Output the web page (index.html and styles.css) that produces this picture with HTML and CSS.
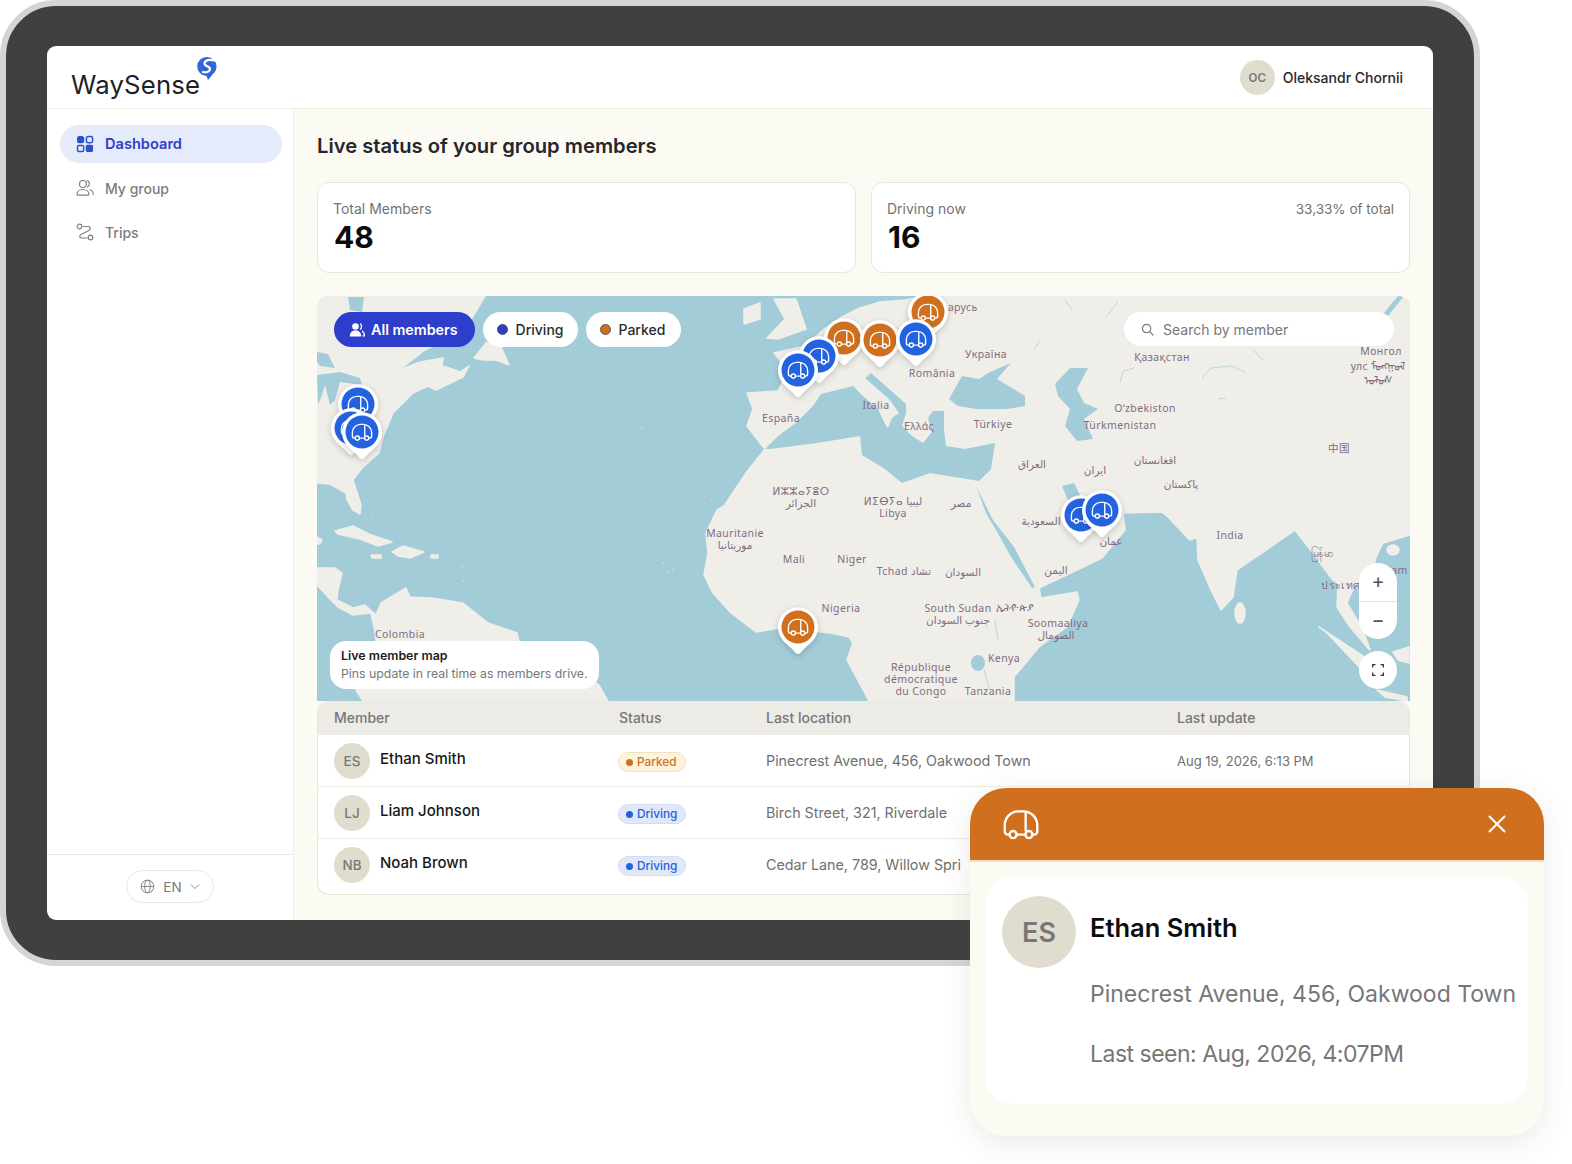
FILE: index.html
```html
<!DOCTYPE html>
<html lang="en">
<head>
    <meta charset="UTF-8">
    <meta name="viewport" content="width=device-width, initial-scale=1.0">
    <title>WaySense</title>
    <link rel="stylesheet" href="styles.css">
</head>
<body>
    <svg class="defs" width="0" height="0">
        <symbol id="car" viewBox="0 0 24 20">
            <path d="M4.5 16.5H3.5a2 2 0 0 1-2-2v-4a9 9 0 0 1 9-9h3a9 9 0 0 1 9 9v4a2 2 0 0 1-2 2h-1M9.2 16.5h5.6M15 1.800V14" fill="none" stroke="currentColor" stroke-width="1.5" stroke-linecap="round" stroke-linejoin="round"/>
            <circle cx="6.900" cy="16.5" r="2.300" fill="none" stroke="currentColor" stroke-width="1.5"/>
            <circle cx="17.100" cy="16.5" r="2.300" fill="none" stroke="currentColor" stroke-width="1.5"/>
        </symbol>
        <symbol id="pin" viewBox="0 0 40 47" overflow="visible">
            <path d="M20 47c-2 0-3-2-5-4C10 38 3 33 1.200 27A20 20 0 1 1 38.800 27C37 33 30 38 25 43c-2 2-3 4-5 4z" fill="#fff"/>
            <circle cx="20" cy="20" r="16.500" fill="currentColor"/>
            <use href="#car" x="9" y="11" width="22" height="18.300" color="#fff"/>
        </symbol>
    </svg>

    <div class="device">
        <div class="screen">
            <header class="top-bar">
                <div class="logo">
                    <span>WaySense</span>
                    <svg class="logo-mark" viewBox="0 0 20 23" width="20" height="23">
                        <path d="M10 0a9.500 9.500 0 0 1 9.500 9.500c0 3.500-1.500 5.500-4 8L11 23 9.500 19A9.500 9.500 0 0 1 10 0z" fill="#2f66d8"/>
                        <path d="M17 3.500C13 2 7.500 3 7.500 6.500c0 3 5.500 2.500 5.500 5.500 0 2.500-3.500 4-7 3" fill="none" stroke="#fff" stroke-width="2.300" stroke-linecap="round"/>
                    </svg>
                </div>
                <div class="user">
                    <span class="avatar avatar-sm">OC</span>
                    <span class="user-name">Oleksandr Chornii</span>
                </div>
            </header>

            <div class="body-row">
                <aside class="sidebar">
                    <nav class="nav">
                        <a class="nav-item active">
                            <svg viewBox="0 0 18 18" width="18" height="18">
                                <rect x="1" y="1" width="7.200" height="7.200" rx="2.500" fill="#2d4fd0"/>
                                <rect x="10.400" y="1.500" width="6.200" height="6.200" rx="2" fill="none" stroke="#2d4fd0" stroke-width="1.500"/>
                                <rect x="1.500" y="10.400" width="6.200" height="6.200" rx="1.500" fill="none" stroke="#2d4fd0" stroke-width="1.500"/>
                                <rect x="9.800" y="9.800" width="7.200" height="7.200" rx="1.500" fill="#2d4fd0"/>
                            </svg>
                            Dashboard
                        </a>
                        <a class="nav-item">
                            <svg viewBox="0 0 18 18" width="18" height="18" fill="none" stroke="#808080" stroke-width="1.200" stroke-linecap="round">
                                <circle cx="7" cy="5" r="3.500"/>
                                <path d="M1 15.500c0-3 2.500-5 6-5s6 2 6 5c0 .5-.3.700-1 .700H2c-.7 0-1-.2-1-.7zM11.500 1.800c2.500.5 2.500 5.500 0 6.300M14 10.800c2 .7 3.200 2.300 3.200 4.500"/>
                            </svg>
                            My group
                        </a>
                        <a class="nav-item">
                            <svg viewBox="0 0 18 18" width="18" height="18" fill="none" stroke="#808080" stroke-width="1.200">
                                <circle cx="3.500" cy="3.500" r="2.300"/>
                                <circle cx="14.500" cy="14.500" r="2.300"/>
                                <path d="M7.500 3.500h5c2 0 2.500 3 .5 4L5 11.500c-2 1-1.500 3.500.5 3.500h5.500" stroke-linecap="round"/>
                            </svg>
                            Trips
                        </a>
                    </nav>
                    <div class="side-foot">
                        <div class="lang">
                            <svg viewBox="0 0 16 16" width="15" height="15" fill="none" stroke="#808080" stroke-width="1">
                                <circle cx="8" cy="8" r="6.800"/>
                                <ellipse cx="8" cy="8" rx="3" ry="6.800"/>
                                <path d="M1.200 8h13.600"/>
                            </svg>
                            <span>EN</span>
                            <svg viewBox="0 0 12 8" width="10" height="7" fill="none" stroke="#909090" stroke-width="1.200">
                                <path d="M1 1.500l5 5 5-5"/>
                            </svg>
                        </div>
                    </div>
                </aside>

                <main class="main">
                    <h1 class="page-title">Live status of your group members</h1>

                    <section class="stats">
                        <div class="stat-card">
                            <div class="stat-top"><span>Total Members</span></div>
                            <div class="stat-num">48</div>
                        </div>
                        <div class="stat-card">
                            <div class="stat-top"><span>Driving now</span><span class="stat-share">33,33% of total</span></div>
                            <div class="stat-num">16</div>
                        </div>
                    </section>

                    <section class="map">
                        <svg class="map-svg" viewBox="317 296 1093 405" width="1093" height="405">
                            <rect x="317" y="296" width="1093" height="405" class="water"/>
                            <g class="land">
                                <!-- north america -->
                                <path d="M317 296L485 296 472 318 450 338 425 350 399 370 420 362 443 358 442 366 449 368 460 372 469 366 463 377 436 390 428 386 413 393 393 413 383 437 379 453 362 468 353 480 361 505 360 514 353 510 347 500 346 493 330 484 317 483z"/>
                                <path d="M474 358L486 343 498 340 509 365 496 360 483 360z"/>
                                <!-- caribbean -->
                                <path d="M335 531L353 526 371 535 392 542 378 546 360 539 338 534z"/>
                                <path d="M392 552L403 546 424 552 410 558 398 556z"/>
                                <path d="M371 555L381 555 381 558 372 558zM431 555L438 555 438 558 431 558zM317 537L322 540 320 544 317 544z"/>
                                <!-- central + south america -->
                                <path d="M317 568L335 568 342 573 338 590 337 600 353 608 365 605 376 615 381 603 406 588 410 597 431 598 463 603 488 623 517 633 519 642 599 685 608 701 363 701 356 690 376 640 374 627 371 613 353 615 338 607 328 597 317 585z"/>
                                <!-- uk -->
                                <path d="M744 309L760 303 760 319 744 324z"/>
                                <path d="M774 299L796 299 806 329 778 339 767 338 785 319z"/>
                                <!-- eurasia + africa -->
                                <path d="M747 393L778 391 788 371 774 353 806 346 824 329 840 318 860 308 880 302 905 300 925 296 1410 296 1410 535 1383 543 1376 557 1372 575 1385 600 1365 595 1355 585 1347 603 1363 630 1370 650 1367 647 1350 627 1337 607 1338 583 1333 580 1323 567 1316 557 1295 530 1291 533 1256 557 1237 570 1233 597 1221 610 1211 590 1198 560 1197 537 1190 540 1183 533 1169 518 1162 512 1123 513 1125 530 1102 558 1077 570 1039 588 1041 598 1077 592 1079 600 1067 627 1039 647 1014 677 1014 701 869 701 847 660 853 643 849 637 831 633 781 628 756 632 731 613 713 593 704 575 708 553 706 533 717 510 724 506 746 473 765 449 760 443 747 426 753 409z"/>
                                <!-- islands -->
                                <path d="M846 399L851 400 851 426 846 425zM872 428L885 428 882 435zM927 449L944 450 930 452zM975 450L985 450 977 454z"/>
                                <path d="M1319 627L1369 660 1379 680 1362 670 1327 633zM1377 690L1407 697 1407 701 1385 697zM1393 652L1409 647 1409 663 1398 660z"/>
                                <ellipse cx="1393" cy="550" rx="6" ry="5"/>
                                <ellipse cx="1240" cy="613" rx="5" ry="10"/>
                            </g>
                            <g class="specks">
                                <circle cx="371" cy="517" r="0.7"/>
                                <circle cx="462" cy="567" r="0.7"/>
                                <circle cx="464" cy="574" r="0.7"/>
                                <circle cx="463" cy="581" r="0.7"/>
                                <circle cx="642" cy="428" r="0.7"/>
                                <circle cx="656" cy="433" r="0.7"/>
                                <circle cx="704" cy="497" r="0.7"/>
                                <circle cx="712" cy="499" r="0.7"/>
                                <circle cx="720" cy="495" r="0.7"/>
                                <circle cx="663" cy="563" r="0.7"/>
                                <circle cx="668" cy="572" r="0.7"/>
                                <circle cx="673" cy="570" r="0.7"/>
                            </g>
                            <g class="water">
                                <path d="M348 297L364 297 362 312 350 310zM317 352L328 354 335 368 320 366 317 362z"/>
                                <path d="M317 375L340 372 360 378 362 385 340 382 335 400 330 405 325 385 322 395 318 405z"/>
                                <path d="M765 449L778 436 796 423 813 406 821 394 853 386 863 396 878 409 885 424 888 428 892 418 899 413 890 400 865 378 871 373 906 404 906 413 902 426 912 436 923 443 932 432 928 418 933 411 944 411 944 429 946 446 965 449 995 443 991 469 979 481 930 473 902 483 885 469 862 455 860 436 817 443 770 449z"/>
                                <path d="M949 399L962 376 979 379 988 373 1011 363 997 379 1025 396 1025 406 1007 409 976 409 958 406z"/>
                                <path d="M1055 384L1070 368 1088 368 1077 389 1084 403 1098 409 1084 419 1093 439 1077 441 1065 426 1070 409 1058 396z"/>
                                <path d="M976 486L983 500 993 520 1014 547 1035 587 1032 588 1011 557 1000 537 986 513z"/>
                                <path d="M1062 486L1074 483 1084 503 1100 512 1085 522 1072 510z"/>
                                <ellipse cx="978" cy="663" rx="7" ry="8"/>
                                <path d="M1398 296L1383 314 1388 316 1404 296z"/>
                            </g>
                            <path class="rivers" d="M1202 378L1211 368 1232 366 1246 373M1120 383L1123 371 1134 368M995 620L998 640M990 690L984 670M1253 350L1263 360M1218 399L1226 398M1065 300L1072 310M1040 340L1034 350M1105 318L1118 302"/>

                            <g class="lbl">
                                <text x="953" y="311">Беларусь</text>
                                <text x="986" y="358">Україна</text>
                                <text x="932" y="377">România</text>
                                <text x="876" y="409">Italia</text>
                                <text x="781" y="422">España</text>
                                <text x="919" y="430">Ελλάς</text>
                                <text x="993" y="428">Türkiye</text>
                                <text x="1162" y="361">Қазақстан</text>
                                <text x="1381" y="355">Монгол</text>
                                <text x="1378" y="370">улс ᠮᠣᠩᠭᠣᠯ</text>
                                <text x="1378" y="384">ᠤᠯᠤᠰ</text>
                                <text x="1145" y="412">O‘zbekiston</text>
                                <text x="1120" y="429">Türkmenistan</text>
                                <text x="1339" y="452">中国</text>
                                <text x="1032" y="468">العراق</text>
                                <text x="1095" y="474">ایران</text>
                                <text x="1155" y="464">افغانستان</text>
                                <text x="1181" y="488">پاکستان</text>
                                <text x="801" y="495">ⵍⵣⵣⴰⵢⴻⵔ</text>
                                <text x="801" y="507">الجزائر</text>
                                <text x="893" y="505">ⵍⵉⴱⵢⴰ ليبيا</text>
                                <text x="893" y="517">Libya</text>
                                <text x="961" y="507">مصر</text>
                                <text x="1041" y="525">السعودية</text>
                                <text x="1111" y="545">عمان</text>
                                <text x="1230" y="539">India</text>
                                <text x="1322" y="557">မြန်မာ</text>
                                <text x="735" y="537">Mauritanie</text>
                                <text x="735" y="549">موريتانيا</text>
                                <text x="794" y="563">Mali</text>
                                <text x="852" y="563">Niger</text>
                                <text x="904" y="575">Tchad تشاد</text>
                                <text x="963" y="576">السودان</text>
                                <text x="1056" y="574">اليمن</text>
                                <text x="1341" y="589">ประเทศ</text>
                                <text x="1398" y="574">lam</text>
                                <text x="841" y="612">Nigeria</text>
                                <text x="958" y="612">South Sudan</text>
                                <text x="958" y="624">جنوب السودان</text>
                                <text x="1015" y="611">ኢትዮጵያ</text>
                                <text x="1058" y="627">Soomaaliya</text>
                                <text x="1056" y="639">الصومال</text>
                                <text x="1004" y="662">Kenya</text>
                                <text x="921" y="671">République</text>
                                <text x="921" y="683">démocratique</text>
                                <text x="921" y="695">du Congo</text>
                                <text x="988" y="695">Tanzania</text>
                                <text x="400" y="638">Colombia</text>
                            </g>

                            <g class="pins">
                                <use href="#pin" x="338" y="384" width="40" height="47" color="#2463e0"/>
                                <use href="#pin" x="331" y="408" width="40" height="47" color="#2463e0"/>
                                <use href="#pin" x="342" y="412" width="40" height="47" color="#2463e0"/>
                                <use href="#pin" x="908" y="292" width="40" height="47" color="#d0701f"/>
                                <use href="#pin" x="824" y="318" width="40" height="47" color="#d0701f"/>
                                <use href="#pin" x="799" y="336" width="40" height="47" color="#2463e0"/>
                                <use href="#pin" x="778" y="350" width="40" height="47" color="#2463e0"/>
                                <use href="#pin" x="860" y="320" width="40" height="47" color="#d0701f"/>
                                <use href="#pin" x="896" y="319" width="40" height="47" color="#2463e0"/>
                                <use href="#pin" x="1061" y="495" width="40" height="47" color="#2463e0"/>
                                <use href="#pin" x="1082" y="490" width="40" height="47" color="#2463e0"/>
                                <use href="#pin" x="778" y="607" width="40" height="47" color="#d0701f"/>
                            </g>
                        </svg>

                        <div class="filters">
                            <button class="pill pill-active">
                                <svg viewBox="0 0 16 16" width="16" height="16" fill="#fff">
                                    <circle cx="6.500" cy="4.500" r="3.300"/>
                                    <path d="M.8 14c0-3.500 2.500-5.500 5.700-5.500s5.700 2 5.700 5.500c0 .4-.3.600-.7.600H1.500c-.4 0-.7-.2-.7-.6z"/>
                                    <path d="M11 1.500c2 .6 2 5 0 6M13 9c1.500.8 2.500 2.500 2.500 4.800h-2" fill="none" stroke="#fff" stroke-width="1.300"/>
                                </svg>
                                All members
                            </button>
                            <button class="pill"><i class="dot dot-blue"></i>Driving</button>
                            <button class="pill pill-last"><i class="dot dot-orange"></i>Parked</button>
                        </div>

                        <div class="search">
                            <svg viewBox="0 0 14 14" width="13" height="13" fill="none" stroke="#777" stroke-width="1.300">
                                <circle cx="6" cy="6" r="4.500"/>
                                <path d="M9.500 9.500L13 13" stroke-linecap="round"/>
                            </svg>
                            Search by member
                        </div>

                        <div class="map-ctrl">
                            <div class="zoom-box">
                                <span>+</span>
                                <span>&minus;</span>
                            </div>
                            <div class="fit-btn">
                                <svg viewBox="0 0 12 12" width="12" height="12" fill="none" stroke="#333" stroke-width="1.300">
                                    <path d="M.7 3.500V.7h2.800M8.500.7h2.800v2.800M11.300 8.500v2.800H8.500M3.500 11.300H.7V8.500"/>
                                </svg>
                            </div>
                        </div>

                        <div class="map-note">
                            <strong>Live member map</strong>
                            <span>Pins update in real time as members drive.</span>
                        </div>
                    </section>

                    <section class="members">
                        <div class="row row-head">
                            <div>Member</div>
                            <div>Status</div>
                            <div>Last location</div>
                            <div>Last update</div>
                        </div>
                        <div class="row">
                            <div class="member"><span class="avatar">ES</span><span class="member-name">Ethan Smith</span></div>
                            <div><span class="badge badge-parked"><i></i>Parked</span></div>
                            <div class="cell-text">Pinecrest Avenue, 456, Oakwood Town</div>
                            <div class="cell-text cell-time">Aug 19, 2026, 6:13 PM</div>
                        </div>
                        <div class="row">
                            <div class="member"><span class="avatar">LJ</span><span class="member-name">Liam Johnson</span></div>
                            <div><span class="badge badge-driving"><i></i>Driving</span></div>
                            <div class="cell-text">Birch Street, 321, Riverdale</div>
                            <div class="cell-text cell-time">Aug 19, 2026, 6:02 PM</div>
                        </div>
                        <div class="row row-last">
                            <div class="member"><span class="avatar">NB</span><span class="member-name">Noah Brown</span></div>
                            <div><span class="badge badge-driving"><i></i>Driving</span></div>
                            <div class="cell-text">Cedar Lane, 789, Willow Spri</div>
                            <div class="cell-text cell-time">Aug 19, 2026, 5:48 PM</div>
                        </div>
                    </section>
                </main>
            </div>
        </div>
    </div>

    <div class="popup">
        <div class="popup-head">
            <svg class="popup-car" width="38" height="31"><use href="#car" width="38" height="31"/></svg>
            <svg viewBox="0 0 20 20" width="20" height="20" fill="none" stroke="#fff" stroke-width="2">
                <path d="M2 2l16 16M18 2L2 18"/>
            </svg>
        </div>
        <div class="popup-card">
            <span class="avatar avatar-lg">ES</span>
            <div class="popup-info">
                <div class="popup-name">Ethan Smith</div>
                <div class="popup-line">Pinecrest Avenue, 456, Oakwood Town</div>
                <div class="popup-line popup-seen">Last seen: Aug, 2026, 4:07PM</div>
            </div>
        </div>
    </div>
</body>
</html>
```

FILE: styles.css
```css
* {
    box-sizing: border-box;
}
body {
    margin: 0;
    min-height: 1164px;
    background-color: #fff;
    font-family: "Inter", "Noto Sans", sans-serif;
    color: #222;
    position: relative;
    overflow: hidden;
}
.defs {
    position: absolute;
}
.device {
    width: 1480px;
    height: 966px;
    padding: 40px 41px;
    border: 6px solid #d5d5d5;
    border-radius: 56px;
    background-color: #404040;
}
.screen {
    width: 1386px;
    height: 874px;
    display: flex;
    flex-direction: column;
    border-radius: 9px;
    background-color: #fff;
    overflow: hidden;
}
.top-bar {
    height: 63px;
    flex: none;
    display: flex;
    align-items: center;
    justify-content: space-between;
    padding: 1px 30px 0 24px;
    border-bottom: 1px solid #f0ede2;
}
.logo {
    display: flex;
    align-items: flex-start;
    color: #1e2026;
    font-size: 25.700px;
    letter-spacing: 0.2px;
    padding-top: 13px;
}
.logo-mark {
    margin: -12px 0 0 -3px;
}
.user {
    display: flex;
    align-items: center;
    gap: 8px;
}
.user-name {
    font-size: 14px;
    font-weight: 500;
    color: #26262b;
}
.avatar {
    width: 36px;
    height: 36px;
    flex: none;
    display: flex;
    align-items: center;
    justify-content: center;
    border-radius: 50%;
    background-color: #e0ddcf;
    color: #777;
    font-size: 13.5px;
    font-weight: 500;
}
.avatar-sm {
    width: 35px;
    height: 35px;
    font-size: 11.5px;
    font-weight: 600;
}
.avatar-lg {
    width: 74px;
    height: 72px;
    font-size: 27px;
    font-weight: 600;
}
.body-row {
    flex: 1;
    display: flex;
    min-height: 0;
}
.sidebar {
    width: 247px;
    flex: none;
    display: flex;
    flex-direction: column;
    border-right: 1px solid #f1efe6;
}
.nav {
    display: flex;
    flex-direction: column;
    gap: 6px;
    padding: 16px 11px 0 13px;
}
.nav-item {
    height: 38px;
    display: flex;
    align-items: center;
    gap: 11px;
    padding-left: 16px;
    border-radius: 19px;
    color: #7c7c7c;
    font-size: 14px;
    font-weight: 500;
}
.nav-item.active {
    background-color: #e5ebfa;
    color: #2d3fc8;
    font-size: 14.600px;
    font-weight: 600;
}
.side-foot {
    margin-top: auto;
    height: 66px;
    display: flex;
    align-items: center;
    justify-content: center;
    padding-bottom: 2px;
    border-top: 1px solid #efe7dc;
}
.lang {
    width: 88px;
    height: 33px;
    display: flex;
    align-items: center;
    justify-content: center;
    gap: 8px;
    border: 1px solid #ebe8dd;
    border-radius: 17px;
    color: #777;
    font-size: 13.5px;
}
.main {
    flex: 1;
    padding: 21px 23px 0;
    background-color: #fbfaf3;
}
.page-title {
    margin: 0 0 18px;
    font-size: 20.200px;
    line-height: 32px;
    padding-bottom: 2px;
    font-weight: 600;
    color: #26262b;
}
.stats {
    display: grid;
    grid-template-columns: 1fr 1fr;
    gap: 15px;
    margin-bottom: 23px;
}
.stat-card {
    height: 91px;
    padding: 16px 15px 0;
    border: 1px solid #e9e6da;
    border-radius: 12px;
    background-color: #fff;
}
.stat-top {
    display: flex;
    justify-content: space-between;
    font-size: 14px;
    line-height: 20px;
    color: #727272;
}
.stat-share {
    font-size: 13.500px;
}
.stat-num {
    margin: 0 0 0 1px;
    font-size: 30px;
    line-height: 36px;
    font-weight: 700;
    color: #0b0b0b;
}
.map {
    position: relative;
    height: 405px;
    border-radius: 12px 12px 0 0;
    overflow: hidden;
}
.map-svg {
    display: block;
}
.water {
    fill: #a3ccd9;
}
.land {
    fill: #f0eee9;
    stroke: #f0eee9;
    stroke-width: 1.5;
    stroke-linejoin: round;
}
.specks {
    fill: #f0eee9;
    opacity: 0.8;
}
.rivers {
    fill: none;
    stroke: #a3ccd9;
    stroke-width: 1;
    opacity: 0.7;
}
.lbl text {
    font-family: "Noto Sans", "DejaVu Sans", "Noto Sans CJK SC", sans-serif;
    font-size: 10.5px;
    letter-spacing: 0.4px;
    text-anchor: middle;
    fill: #806d80;
}
.pins use {
    filter: drop-shadow(0 2px 3px rgba(0, 0, 0, 0.18));
}
.filters {
    position: absolute;
    top: 16px;
    left: 17px;
    display: flex;
    gap: 8px;
}
.pill {
    height: 35px;
    display: flex;
    align-items: center;
    gap: 8px;
    padding: 0 14px;
    border: none;
    border-radius: 18px;
    background-color: #fff;
    color: #2b2b30;
    font-family: inherit;
    font-size: 14px;
    font-weight: 500;
}
.pill-active {
    gap: 6px;
    padding: 0 17px 0 15px;
    background-color: #2c3ecb;
    color: #fff;
    font-size: 14.300px;
    font-weight: 600;
}
.pill-last {
    padding-right: 16px;
}
.dot {
    width: 11px;
    height: 11px;
    border-radius: 50%;
    border: 1px solid #555;
}
.dot-blue {
    background-color: #2c3ecb;
}
.dot-orange {
    background-color: #d0701f;
}
.search {
    position: absolute;
    top: 16px;
    right: 16px;
    width: 270px;
    height: 34px;
    display: flex;
    align-items: center;
    gap: 9px;
    padding-left: 17px;
    border-radius: 17px;
    background-color: #fff;
    color: #777;
    font-size: 14px;
}
.map-ctrl {
    position: absolute;
    right: 13px;
    top: 267px;
    display: flex;
    flex-direction: column;
    gap: 12px;
}
.zoom-box {
    width: 38px;
    border-radius: 19px;
    background-color: #fff;
    overflow: hidden;
}
.zoom-box span {
    height: 38px;
    display: flex;
    align-items: center;
    justify-content: center;
    padding-bottom: 2px;
    font-size: 20px;
    color: #555;
}
.zoom-box span + span {
    border-top: 1px solid #e4e2da;
}
.fit-btn {
    width: 38px;
    height: 38px;
    display: flex;
    align-items: center;
    justify-content: center;
    border-radius: 50%;
    background-color: #fff;
}
.map-note {
    position: absolute;
    left: 13px;
    top: 345px;
    width: 269px;
    height: 48px;
    display: flex;
    flex-direction: column;
    justify-content: center;
    gap: 2px;
    padding-left: 11px;
    border-radius: 16px;
    background-color: #fff;
}
.map-note strong {
    font-size: 12.400px;
    line-height: 16px;
    font-weight: 600;
    color: #1d1d20;
}
.map-note span {
    font-size: 12.300px;
    line-height: 16px;
    color: #777;
    white-space: nowrap;
}
.members {
    border: 1px solid #e9e6da;
    border-top: none;
    border-radius: 12px;
    background-color: #fff;
    overflow: hidden;
}
.row {
    height: 52px;
    display: grid;
    grid-template-columns: 285px 147px 411px 1fr;
    padding: 8px 0 0 16px;
    border-bottom: 1px solid #f0ede4;
}
.row-head {
    height: 34px;
    padding-top: 7px;
    border-bottom: none;
    background-color: #ecebe6;
    color: #777;
    font-size: 14px;
    line-height: 20px;
    font-weight: 500;
}
.row-last {
    height: 55px;
    border-bottom: none;
}
.member {
    display: flex;
    align-items: flex-start;
    gap: 10px;
}
.member-name {
    margin-top: 6px;
    font-size: 15px;
    line-height: 20px;
    font-weight: 500;
    color: #18181a;
}
.badge {
    width: 68px;
    height: 20px;
    margin: 9px 0 0 -1px;
    display: flex;
    align-items: center;
    gap: 4px;
    padding-left: 7px;
    border-radius: 10px;
    font-size: 11.800px;
    font-weight: 500;
}
.badge i {
    width: 7px;
    height: 7px;
    border-radius: 50%;
    background-color: currentColor;
}
.badge-parked {
    border: 1px solid #f1e2c2;
    background-color: #fdf3dd;
    color: #d0701f;
}
.badge-driving {
    border: 1px solid #d3dcf2;
    background-color: #dfe7f9;
    color: #2463e0;
}
.cell-text {
    margin-top: 8px;
    font-size: 14.300px;
    line-height: 20px;
    color: #707070;
    white-space: nowrap;
}
.cell-time {
    font-size: 13px;
}
.popup {
    position: absolute;
    left: 970px;
    top: 788px;
    width: 574px;
    height: 348px;
    border-radius: 36px;
    background-color: #fbfaf3;
    box-shadow: 0 8px 30px rgba(60, 50, 20, 0.1);
    overflow: hidden;
}
.popup-head {
    height: 74px;
    display: flex;
    align-items: center;
    justify-content: space-between;
    padding: 0 37px 0 32px;
    border-bottom: 2px solid #efdcc0;
    background-color: #d0701f;
    color: #fff;
}
.popup-card {
    display: flex;
    align-items: flex-start;
    gap: 14px;
    height: 227px;
    margin: 15px 16px 0 15px;
    padding: 19px 17px;
    border-radius: 28px;
    background-color: #fff;
}
.popup-name {
    margin: 17px 0 36px;
    font-size: 25.500px;
    line-height: 30px;
    font-weight: 600;
    color: #0d0d0f;
}
.popup-line {
    font-size: 23px;
    line-height: 30px;
    color: #767676;
    white-space: nowrap;
}
.popup-seen {
    margin-top: 30px;
    letter-spacing: -0.5px;
}
```
